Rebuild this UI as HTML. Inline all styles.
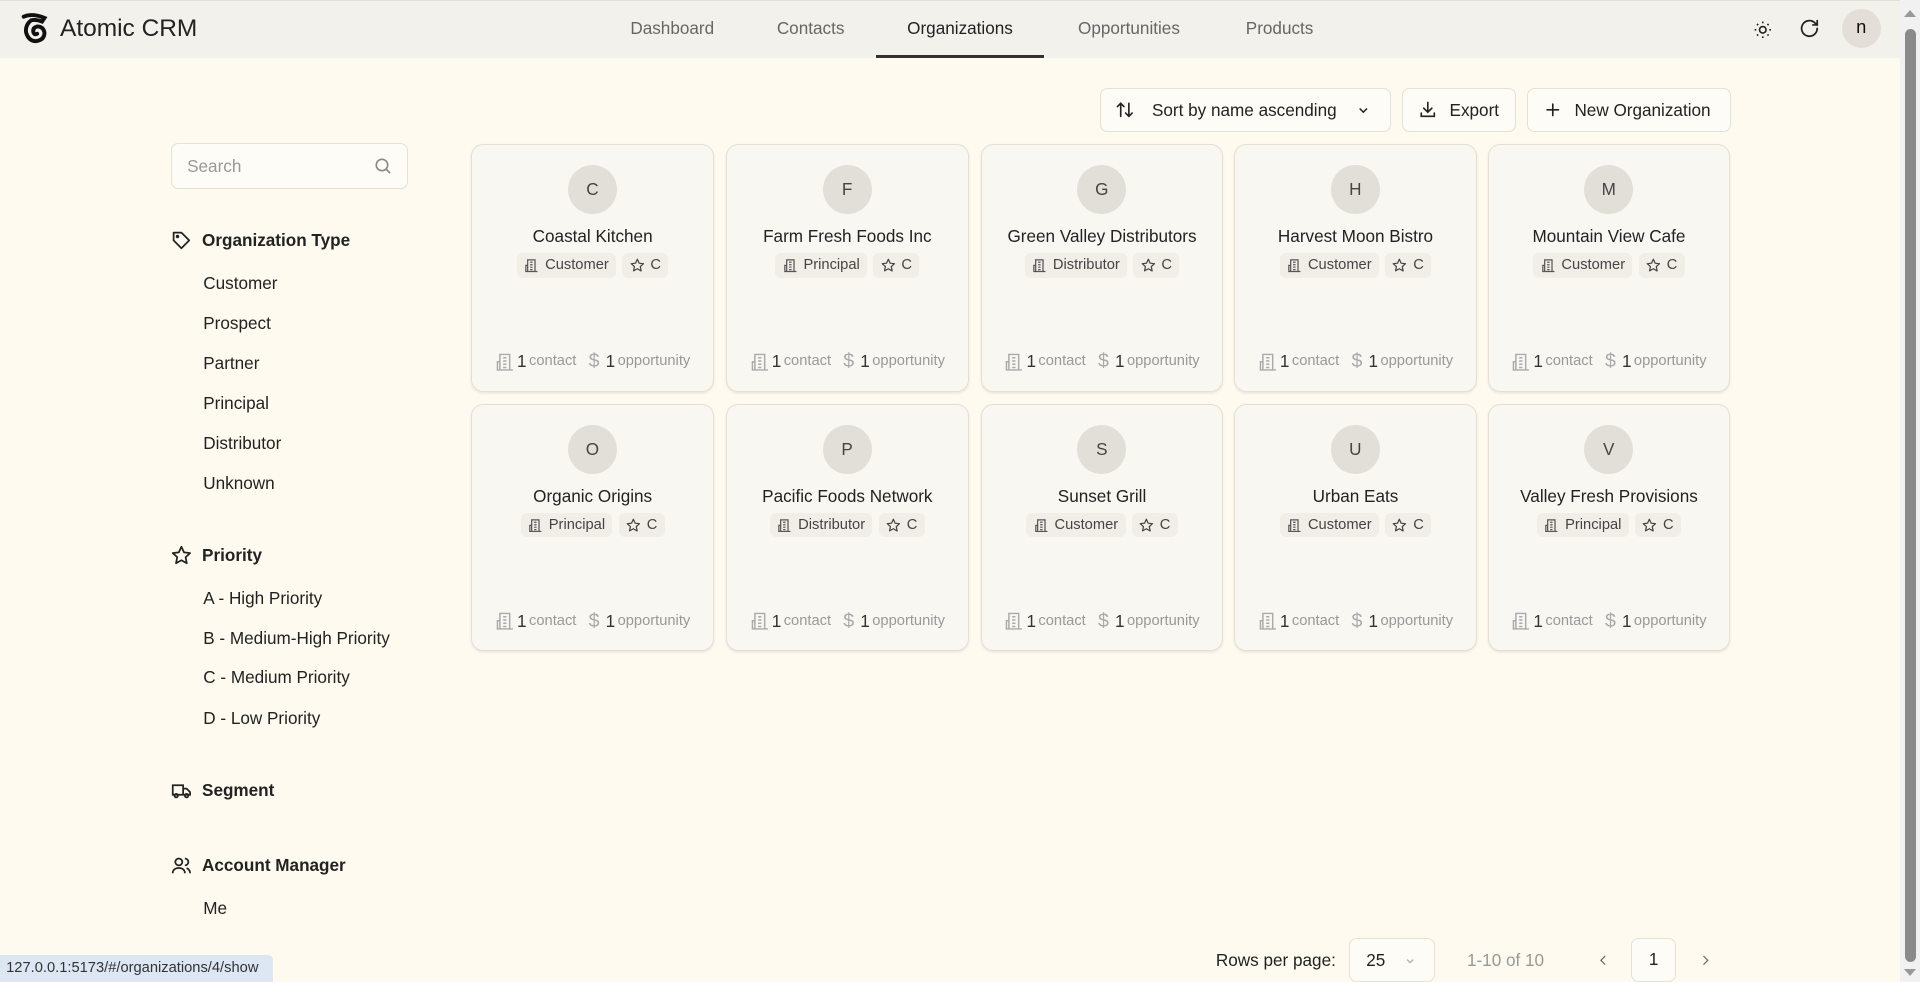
<!DOCTYPE html>
<html><head><meta charset="utf-8"><style>
html,body{margin:0;padding:0;width:1920px;height:982px;overflow:hidden;background:#fefaef}
#z{zoom:1.22449;width:1568px;height:802px;position:relative;font-family:"Liberation Sans",sans-serif;color:#222}
.a{position:absolute}
.hdr{left:0;top:0;width:1552px;height:47px;background:#f3f1eb;border-top:1px solid #e2e0dc;box-sizing:border-box}
.nav{top:15px;font-size:14px;color:#666;transform:translateX(-50%)}
.btn{top:72px;height:36px;border:1px solid #e6e1d6;border-radius:6px;background:#fefcf6;box-sizing:border-box;display:flex;align-items:center;font-size:14px;color:#222;padding:0 12px;gap:10px}
.fh{left:140px;font-size:14px;font-weight:bold;display:flex;align-items:center;gap:8px;color:#222}
.fi{left:166px;font-size:14px;color:#222}
.card{width:198px;height:202px;border:1px solid #e6dfd1;border-radius:10px;background:#f9f7f2;box-sizing:border-box;box-shadow:0 1px 2px rgba(0,0,0,.08)}
.av{position:absolute;left:78px;top:16px;width:40px;height:40px;border-radius:50%;background:#e2dfd8;text-align:center;line-height:40px;font-size:14px;color:#444}
.nm{position:absolute;left:0;right:0;top:66px;text-align:center;font-size:14px;color:#222;white-space:nowrap}
.bd{position:absolute;left:0;right:0;top:88px;display:flex;justify-content:center;gap:5px}
.b{background:#f1eee8;border-radius:5px;height:20px;padding:0 6px;font-size:12px;color:#444;display:flex;align-items:center;gap:5px}
.ft{position:absolute;left:0;right:0;top:167px;display:flex;justify-content:center;gap:10px;font-size:12px;color:#999;align-items:center}
.ft b{font-weight:normal;color:#333;font-size:14px}
.ft span{display:flex;align-items:center;gap:2px}
</style></head><body><div id="z">
<div class="a hdr"></div>
<svg class="a" style="left:16px;top:11px" width="24" height="26" viewBox="0 0 24 26"><path d="M3 3 Q10 0 20 4 L18 7 Q13 5 9 6 Q4 10 5 16 Q7 23 13 23 Q20 22 20 16 Q19 11 14 11 Q10 12 11 16 Q12 18 14 17" fill="none" stroke="#111" stroke-width="3.2" stroke-linecap="round"/></svg>
<div class="a" style="left:49px;top:12px;font-size:20px;color:#222">Atomic CRM</div>
<div class="a nav" style="left:549px">Dashboard</div>
<div class="a nav" style="left:662px">Contacts</div>
<div class="a nav" style="left:784px;color:#222">Organizations</div>
<div class="a nav" style="left:922px">Opportunities</div>
<div class="a nav" style="left:1045px">Products</div>
<div class="a" style="left:715px;top:45px;width:138px;height:2px;background:#333"></div>
<svg class="a" style="left:1432px;top:16px" width="16" height="16" viewBox="0 0 24 24" fill="none" stroke="#222" stroke-width="2"><circle cx="12" cy="12" r="4"/><path d="M12 2v2M12 20v2M4.9 4.9l1.4 1.4M17.7 17.7l1.4 1.4M2 12h2M20 12h2M4.9 19.1l1.4-1.4M17.7 6.3l1.4-1.4"/></svg>
<svg class="a" style="left:1469px;top:15px" width="17" height="17" viewBox="0 0 24 24" fill="none" stroke="#222" stroke-width="2" stroke-linecap="round"><path d="M21 12a9 9 0 1 1-3-6.7L21 8"/><path d="M21 3v5h-5"/></svg>
<div class="a" style="left:1504px;top:7px;width:32px;height:32px;border-radius:50%;background:#e3dfd8;text-align:center;line-height:30px;font-size:15px;color:#111">n</div>

<div class="a btn" style="left:898px;width:238px"><svg width="16" height="16" viewBox="0 0 24 24" fill="none" stroke="#222" stroke-width="2" stroke-linecap="round"><path d="M7 20V4M3 8l4-4 4 4M17 4v16M13 16l4 4 4-4"/></svg><span style="margin-left:4px">Sort by name ascending</span><svg style="margin-left:6px" width="12" height="12" viewBox="0 0 24 24" fill="none" stroke="#222" stroke-width="2.5"><path d="M6 9l6 6 6-6"/></svg></div>
<div class="a btn" style="left:1145px;width:93px"><svg width="16" height="16" viewBox="0 0 24 24" fill="none" stroke="#222" stroke-width="2" stroke-linecap="round"><path d="M12 3v12M7 10l5 5 5-5M4 16v4h16v-4"/></svg>Export</div>
<div class="a btn" style="left:1247px;width:167px"><svg width="16" height="16" viewBox="0 0 24 24" fill="none" stroke="#222" stroke-width="2" stroke-linecap="round"><path d="M12 5v14M5 12h14"/></svg>New Organization</div>

<div class="a" style="left:140px;top:117px;width:193px;height:37px;border:1px solid #e6e1d6;border-radius:6px;box-sizing:border-box;background:#fefcf6"><span class="a" style="left:12px;top:10px;font-size:14px;color:#999">Search</span><svg class="a" style="left:164px;top:10px" width="16" height="16" viewBox="0 0 24 24" fill="none" stroke="#888" stroke-width="2"><circle cx="11" cy="11" r="7"/><path d="M16 16l5 5"/></svg></div>

<div class="a fh" style="top:188px"><svg width="17" height="17" viewBox="0 0 24 24" fill="none" stroke="#222" stroke-width="2" stroke-linejoin="round"><path d="M3 3h9l9 9-9 9-9-9z"/><circle cx="7.5" cy="7.5" r="1"/></svg>Organization Type</div>
<div class="a fi" style="top:223px">Customer</div><div class="a fi" style="top:256px">Prospect</div><div class="a fi" style="top:288px">Partner</div><div class="a fi" style="top:321px">Principal</div><div class="a fi" style="top:354px">Distributor</div><div class="a fi" style="top:386px">Unknown</div>
<div class="a fh" style="top:445px"><svg width="17" height="17" viewBox="0 0 24 24" fill="none" stroke="#222" stroke-width="2" stroke-linejoin="round"><path d="M12 2l3 6.5 7 .8-5.2 4.8 1.4 7L12 17.6 5.8 21l1.4-7L2 9.3l7-.8z"/></svg>Priority</div>
<div class="a fi" style="top:480px">A - High Priority</div><div class="a fi" style="top:513px">B - Medium-High Priority</div><div class="a fi" style="top:545px">C - Medium Priority</div><div class="a fi" style="top:578px">D - Low Priority</div>
<div class="a fh" style="top:637px"><svg width="17" height="17" viewBox="0 0 24 24" fill="none" stroke="#222" stroke-width="2"><path d="M2 6h12v11H2zM14 10h4l4 4v3h-8"/><circle cx="6" cy="18" r="2"/><circle cx="18" cy="18" r="2"/></svg>Segment</div>
<div class="a fh" style="top:698px"><svg width="17" height="17" viewBox="0 0 24 24" fill="none" stroke="#222" stroke-width="2"><circle cx="9" cy="8" r="4"/><path d="M2 21c0-4 3-6 7-6s7 2 7 6M16 4a4 4 0 0 1 0 8M22 21c0-3-2-5-4-6"/></svg>Account Manager</div>
<div class="a fi" style="top:733px">Me</div>

<div id="cards"></div>

<div class="a" style="left:993px;top:776px;font-size:14px;color:#222">Rows per page:</div>
<div class="a" style="left:1102px;top:766px;width:70px;height:36px;border:1px solid #e6e1d6;border-radius:6px;box-sizing:border-box;background:#fefcf6"><span class="a" style="left:13px;top:9px;font-size:14px">25</span><svg class="a" style="left:44px;top:13px" width="10" height="10" viewBox="0 0 24 24" fill="none" stroke="#aaa" stroke-width="2.5"><path d="M6 9l6 6 6-6"/></svg></div>
<div class="a" style="left:1198px;top:776px;font-size:14px;color:#999">1-10 of 10</div>
<svg class="a" style="left:1303px;top:778px" width="12" height="12" viewBox="0 0 24 24" fill="none" stroke="#666" stroke-width="2"><path d="M15 5l-7 7 7 7"/></svg>
<div class="a" style="left:1332px;top:766px;width:37px;height:36px;border:1px solid #e6e1d6;border-radius:6px;box-sizing:border-box;background:#fefcf6;text-align:center;line-height:34px;font-size:14px">1</div>
<svg class="a" style="left:1387px;top:778px" width="12" height="12" viewBox="0 0 24 24" fill="none" stroke="#666" stroke-width="2"><path d="M9 5l7 7-7 7"/></svg>

<div class="a" style="left:0;top:780px;width:223px;height:22px;background:#dde6f3;border-top-right-radius:4px;font-size:12px;color:#333;line-height:22px;padding-left:5px;box-sizing:border-box">127.0.0.1:5173/#/organizations/4/show</div>
<div class="a" style="left:1552px;top:0;width:16px;height:802px;background:#f1f1f1"></div>
<div class="a" style="left:1556px;top:24px;width:9px;height:762px;background:#8a8a8a;border-radius:5px"></div>
<div class="a" style="left:1555px;top:8px;width:0;height:0;border-left:5px solid transparent;border-right:5px solid transparent;border-bottom:6px solid #999"></div>
<div class="a" style="left:1555px;top:791px;width:0;height:0;border-left:5px solid transparent;border-right:5px solid transparent;border-top:6px solid #999"></div>
</div>
<script>
var d=[["C","Coastal Kitchen","Customer"],["F","Farm Fresh Foods Inc","Principal"],["G","Green Valley Distributors","Distributor"],["H","Harvest Moon Bistro","Customer"],["M","Mountain View Cafe","Customer"],["O","Organic Origins","Principal"],["P","Pacific Foods Network","Distributor"],["S","Sunset Grill","Customer"],["U","Urban Eats","Customer"],["V","Valley Fresh Provisions","Principal"]];
var xs=[385,593,801,1008,1215];
var bld='<svg width="12" height="12" viewBox="0 0 24 24" fill="none" stroke="#555" stroke-width="2"><path d="M6 22V3h12v19M2 22h20M6 12H3v10M10 7h4M10 11h4M10 15h4M10 19h4"/></svg>';
var bldg='<svg width="16" height="16" viewBox="0 0 24 24" fill="none" stroke="#aaa" stroke-width="1.8"><path d="M6 22V3h12v19M2 22h20M6 12H3v10M10 7h4M10 11h4M10 15h4M10 19h4"/></svg>';
var star='<svg width="12" height="12" viewBox="0 0 24 24" fill="none" stroke="#444" stroke-width="2" stroke-linejoin="round"><path d="M12 2l3 6.5 7 .8-5.2 4.8 1.4 7L12 17.6 5.8 21l1.4-7L2 9.3l7-.8z"/></svg>';
var h='';
d.forEach(function(c,i){var x=xs[i%5],y=i<5?118:330;
h+='<div class="a card" style="left:'+x+'px;top:'+y+'px"><div class="av">'+c[0]+'</div><div class="nm">'+c[1]+'</div><div class="bd"><div class="b">'+bld+c[2]+'</div><div class="b">'+star+'C</div></div><div class="ft"><span>'+bldg+'<b>1</b>contact</span><span><span style="font-size:16px;color:#aaa;margin-right:3px">$</span><b>1</b>opportunity</span></div></div>';});
document.getElementById('cards').innerHTML=h;
</script>
</body></html>
